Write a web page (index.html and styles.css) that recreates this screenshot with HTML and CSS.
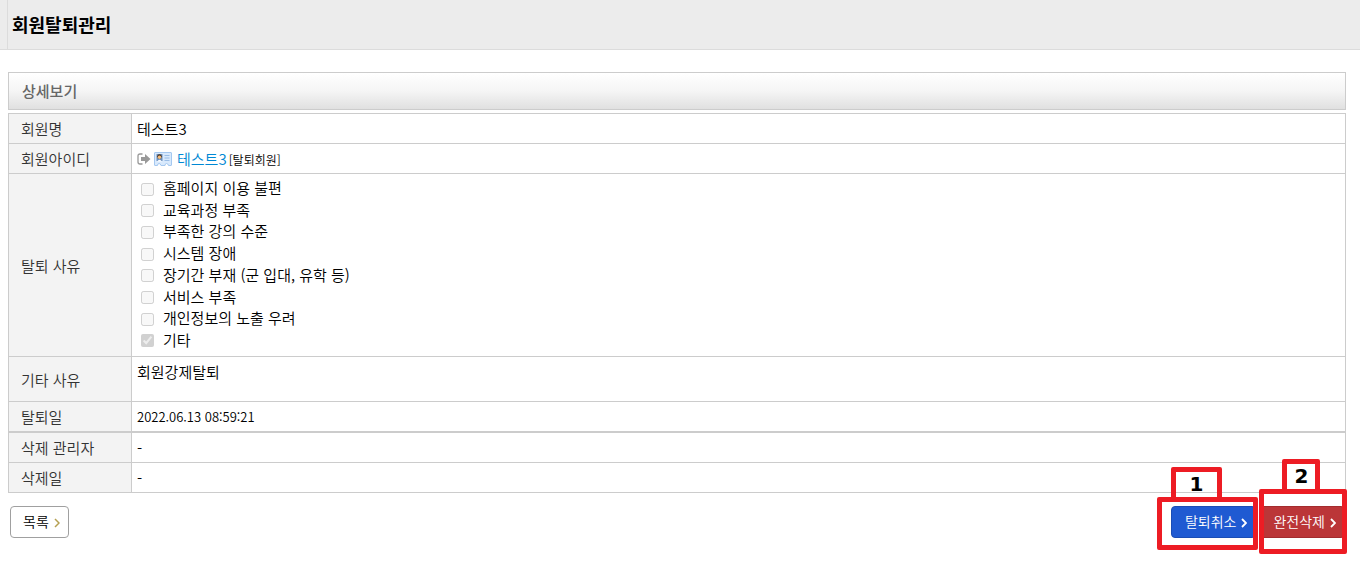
FILE: index.html
```html
<!DOCTYPE html>
<html lang="ko">
<head>
<meta charset="utf-8">
<title>회원탈퇴관리</title>
<link rel="stylesheet" href="styles.css">
</head>
<body>
<header class="page-header"><h1 class="page-title">회원탈퇴관리</h1></header>
<main class="content">
  <h2 class="panel-title">상세보기</h2>
  <table class="detail">
    <tr><th scope="row">회원명</th><td>테스트3</td></tr>
    <tr>
      <th scope="row">회원아이디</th>
      <td>
        <div class="member">
          <svg class="icon-login" width="14" height="12" viewBox="0 0 14 12" aria-hidden="true">
            <path d="M5.500 1H3Q1 1 1 3V9Q1 11 3 11H5.500" fill="none" stroke="#999" stroke-width="1.300"/>
            <path d="M4 4H8V1L13.500 6L8 11V8H4Z" fill="#999"/>
          </svg>
          <svg class="icon-card" width="18" height="14" viewBox="0 0 18 14" aria-hidden="true">
            <path d="M1 .5H17Q17.500 .5 17.500 1V13Q17.500 13.500 17 13.500H14.500Q14 11.500 12.500 11.500T11 13.500H7Q6.500 11.500 5 11.500T3.500 13.500H1Q.5 13.500 .5 13V1Q.5 .5 1 .5Z" fill="#d8e9fc" stroke="#a5c8f0"/>
            <rect x="2.500" y="2" width="6" height="7" fill="#6d92c0"/>
            <circle cx="5.500" cy="4.500" r="2.300" fill="#493322"/>
            <circle cx="5.500" cy="5.200" r="1.700" fill="#f6bd7c"/>
            <path d="M3 9.500Q5.500 6 8 9.500Z" fill="#fff"/>
            <path d="M10.500 3.500H15.500M10.500 6H15.500M10.500 8.500H15.500" stroke="#9abde6"/>
          </svg>
          <a class="member-link" href="#">테스트3</a>
          <span class="member-state">[탈퇴회원]</span>
        </div>
      </td>
    </tr>
    <tr>
      <th scope="row">탈퇴 사유</th>
      <td class="reason-cell">
        <div class="reasons">
          <label class="reason"><input class="check" type="checkbox" disabled>홈페이지 이용 불편</label>
          <label class="reason"><input class="check" type="checkbox" disabled>교육과정 부족</label>
          <label class="reason"><input class="check" type="checkbox" disabled>부족한 강의 수준</label>
          <label class="reason"><input class="check" type="checkbox" disabled>시스템 장애</label>
          <label class="reason"><input class="check" type="checkbox" disabled>장기간 부재 (군 입대, 유학 등)</label>
          <label class="reason"><input class="check" type="checkbox" disabled>서비스 부족</label>
          <label class="reason"><input class="check" type="checkbox" disabled>개인정보의 노출 우려</label>
          <label class="reason"><input class="check" type="checkbox" disabled checked>기타</label>
        </div>
      </td>
    </tr>
    <tr class="row-memo"><th scope="row">기타 사유</th><td>회원강제탈퇴</td></tr>
    <tr><th scope="row">탈퇴일</th><td class="date">2022.06.13 08:59:21</td></tr>
  </table>
  <table class="detail">
    <tr><th scope="row">삭제 관리자</th><td>-</td></tr>
    <tr><th scope="row">삭제일</th><td>-</td></tr>
  </table>
  <div class="actions">
    <button class="btn btn-list" type="button">목록<svg class="chevron" width="6" height="10" viewBox="0 0 6 10" aria-hidden="true"><path d="M1 1L5 5L1 9" fill="none" stroke="#b5a052" stroke-width="1.500"/></svg></button>
    <div class="actions-right">
      <div class="marked">
        <button class="btn btn-cancel" type="button">탈퇴취소<svg class="chevron" width="6" height="10" viewBox="0 0 6 10" aria-hidden="true"><path d="M1 1L5 5L1 9" fill="none" stroke="#fff" stroke-width="1.800"/></svg></button>
        <span class="mark mark-one"><span class="mark-number">1</span></span>
      </div>
      <div class="marked">
        <button class="btn btn-delete" type="button">완전삭제<svg class="chevron" width="6" height="10" viewBox="0 0 6 10" aria-hidden="true"><path d="M1 1L5 5L1 9" fill="none" stroke="#fff" stroke-width="1.800"/></svg></button>
        <span class="mark mark-two"><span class="mark-number">2</span></span>
      </div>
    </div>
  </div>
</main>
</body>
</html>
```
FILE: styles.css
```css
* { box-sizing: border-box; }
body {
  margin: 0;
  background: #fff;
  color: #000;
  font: 350 15px/20px "Noto Sans CJK KR", sans-serif;
}
.page-header {
  padding-left: 7px;
  background: #ececec;
  border-bottom: 1px solid #dcdcdc;
}
.page-title {
  margin: 0;
  padding: 12px 4px;
  border-left: 1px solid #dcdcdc;
  font-size: 18px;
  line-height: 25px;
  font-weight: 700;
}
.content { padding: 22px 14px 24px 8px; }
.panel-title {
  margin: 0 0 3px;
  padding: 8px 13px;
  border: 1px solid #ccc;
  background: linear-gradient(#fff, #f5f5f5 50%, #e0e0e0);
  color: #666;
  font-size: 15px;
  line-height: 20px;
  font-weight: 500;
}
.detail {
  width: 100%;
  border: 1px solid #ccc;
  border-spacing: 0;
  table-layout: fixed;
}
.detail th, .detail td {
  height: 30px;
  padding: 5px 5px 4px;
  border-top: 1px solid #ccc;
  text-align: left;
  font-weight: 350;
}
.detail tr:first-child > * { border-top: 0; height: 29px; }
.detail th {
  width: 123px;
  padding-left: 12px;
  border-right: 1px solid #ccc;
  background: #f3f3f3;
  color: #333;
}
.detail .row-memo > * { height: 45px; }
.detail .row-memo td { vertical-align: top; }
.detail .date { font-size: 13px; }
.member { display: flex; align-items: center; }
.icon-card { margin: 0 5px 0 3px; }
.member-link { color: #0088d4; text-decoration: none; }
.member-state { margin-left: 2px; padding-top: 2px; font-size: 12px; line-height: 18px; }
.detail .reason-cell { padding: 4px 9px 6px; }
.reasons {
  display: flex;
  flex-direction: column;
  align-items: flex-start;
  justify-content: space-between;
  min-height: 172px;
}
.reason { display: flex; align-items: center; gap: 9px; }
.check { width: 13px; height: 13px; margin: 2px 0 0; }
.actions {
  display: flex;
  justify-content: space-between;
  margin-top: 13px;
  padding: 0 1px 0 2px;
}
.actions-right { display: flex; gap: 3px; }
.btn {
  display: flex;
  align-items: center;
  height: 32px;
  padding: 0 8px 2px 13px;
  border: 1px solid #a0a0a0;
  border-radius: 4px;
  background: #fff;
  color: #000;
  font: 350 14px/20px "Noto Sans CJK KR", sans-serif;
}
.chevron { margin: 3px 0 0 5px; }
.btn-list { padding-left: 12px; }
.btn-cancel { background: #1f5ad2; border-color: #1a4db5; color: #fff; }
.btn-delete { background: #bb3638; border-color: #a32c2e; color: #fff; }
.marked { position: relative; }
.mark { position: absolute; border: 5px solid #ed1c24; border-radius: 2px; }
.mark-one { left: -14px; right: -2px; top: -9px; height: 53px; }
.mark-two { left: 0; right: -2px; top: -17px; height: 65px; }
.mark-number {
  position: absolute;
  bottom: 100%;
  height: 35px;
  border: 5px solid #ed1c24;
  border-radius: 2px;
  color: #000;
  font: 700 20px/24px "DejaVu Sans", sans-serif;
  text-align: center;
}
.mark-one .mark-number { left: 9px; width: 51px; }
.mark-two .mark-number { left: 18px; width: 38px; }
```
